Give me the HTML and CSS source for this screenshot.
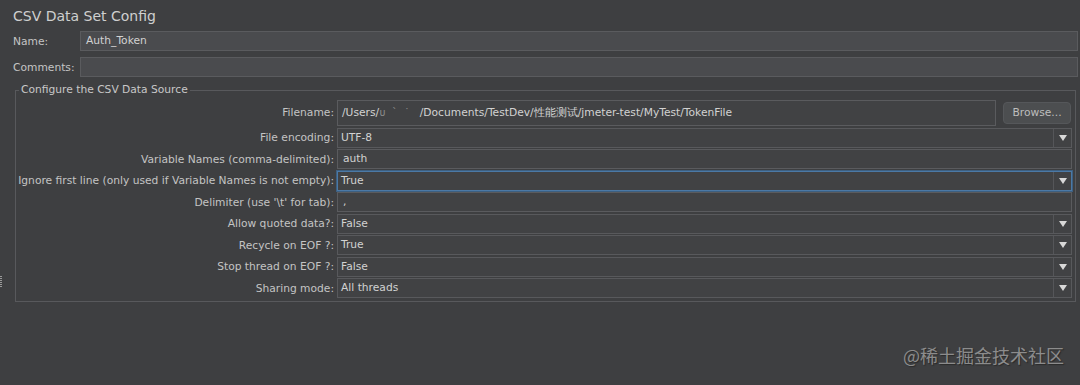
FILE: index.html
```html
<!DOCTYPE html>
<html lang="en">
<head>
    <meta charset="UTF-8">
    <title>CSV Data Set Config</title>
    <link rel="stylesheet" href="styles.css">
</head>
<body>
<div class="panel">
    <h1 class="panel--title">CSV Data Set Config</h1>

    <div class="panel--row">
        <label class="panel--label">Name:</label>
        <div class="field field_name">Auth_Token</div>
    </div>
    <div class="panel--row">
        <label class="panel--label">Comments:</label>
        <div class="field field_name"></div>
    </div>

    <fieldset class="source">
        <legend class="source--legend">Configure the CSV Data Source</legend>

        <div class="source--grid">
            <label class="source--label">Filename:</label>
            <div class="source--file">
                <div class="field field_file">/Users/<span class="blur">&#7452;&nbsp; &#96; &nbsp;&#729; &nbsp; </span>/Documents/TestDev/性能测试/jmeter-test/MyTest/TokenFile</div>
                <button class="browse">Browse...</button>
            </div>

            <label class="source--label">File encoding:</label>
            <div class="combo"><span class="combo--value">UTF-8</span><span class="combo--arrow"></span></div>

            <label class="source--label">Variable Names (comma-delimited):</label>
            <div class="field field_text">auth</div>

            <label class="source--label">Ignore first line (only used if Variable Names is not empty):</label>
            <div class="combo combo_focus"><span class="combo--value">True</span><span class="combo--arrow"></span></div>

            <label class="source--label">Delimiter (use '\t' for tab):</label>
            <div class="field field_text">,</div>

            <label class="source--label">Allow quoted data?:</label>
            <div class="combo"><span class="combo--value">False</span><span class="combo--arrow"></span></div>

            <label class="source--label">Recycle on EOF ?:</label>
            <div class="combo"><span class="combo--value">True</span><span class="combo--arrow"></span></div>

            <label class="source--label">Stop thread on EOF ?:</label>
            <div class="combo"><span class="combo--value">False</span><span class="combo--arrow"></span></div>

            <label class="source--label">Sharing mode:</label>
            <div class="combo"><span class="combo--value">All threads</span><span class="combo--arrow"></span></div>
        </div>
    </fieldset>

    <div class="splitter"></div>
</div>

<div class="watermark">@稀土掘金技术社区</div>
</body>
</html>
```

FILE: styles.css
```css
*, *:before, *:after {
    box-sizing: border-box;
    padding: 0;
    margin: 0;
}

html, body {
    height: 100%;
}

body {
    background: #3e3f41;
    overflow: hidden;
    font-family: "DejaVu Sans", Verdana, sans-serif;
    font-size: 10.7px;
    color: #c4c4c4;
    position: relative;
}

.panel {
    padding: 6px 2px 0 13px;
    position: relative;
    height: 100%;
}

.panel--title {
    font-size: 14px;
    font-weight: normal;
    color: #cfcfcf;
    height: 20px;
    line-height: 20px;
    margin-bottom: 5px;
}

.panel--row {
    display: flex;
    align-items: center;
    margin-bottom: 6px;
}

.panel--label {
    width: 67px;
    flex: 0 0 67px;
}

.field {
    background: #46474a;
    border: 1px solid #5a5b5e;
    color: #d2d2d2;
    height: 20px;
    line-height: 18px;
    padding: 0 5px;
    white-space: nowrap;
    overflow: hidden;
}

.field_name {
    flex: 1;
    background: #4a4b4e;
}

/* Bloc "Configure the CSV Data Source" */
.source {
    border: 1px solid #58595c;
    margin: 2px 0 0 2px;
    width: 1061px;
    padding: 0 3px 3px 0;
}

.source--legend {
    margin-left: 3px;
    padding: 0 2px;
    color: #c8c8c8;
    line-height: 14px;
}

.source--grid {
    display: grid;
    grid-template-columns: 318px 1fr;
    column-gap: 3px;
    row-gap: 1.5px;
    align-items: center;
    padding-top: 2px;
}

.source--label {
    text-align: right;
    white-space: nowrap;
}

.source--file {
    display: flex;
    align-items: center;
    gap: 7px;
    height: 27px;
}

.field_file {
    flex: 1;
    height: 26px;
    line-height: 24px;
    background: #414244;
    padding-left: 4px;
}

.blur {
    color: #8a8a8a;
}

.browse {
    width: 68px;
    height: 22px;
    margin-right: 1px;
    background: #4c4e50;
    border: 1px solid #55575a;
    border-radius: 4px;
    color: #bdbdbd;
    font-family: inherit;
    font-size: 10.7px;
}

.field_text {
    background: #414244;
    height: 20px;
}

.combo {
    display: flex;
    height: 20px;
    background: #414244;
    border: 1px solid #58595c;
    color: #d2d2d2;
}

.combo_focus {
    border-color: #4b79a6;
    box-shadow: 0 0 0 1px #3d5f80;
}

.combo--value {
    flex: 1;
    line-height: 18px;
    padding-left: 3px;
}

.combo--arrow {
    width: 18px;
    border-left: 1px solid #555659;
    display: flex;
    align-items: center;
    justify-content: center;
}

.combo--arrow:after {
    content: "";
    border-left: 4px solid transparent;
    border-right: 4px solid transparent;
    border-top: 6px solid #d8d8d8;
}

.splitter {
    position: absolute;
    left: 0;
    top: 276px;
    width: 2px;
    height: 12px;
    background: repeating-linear-gradient(#9a9a9a 0 1px, transparent 1px 2px);
}

.watermark {
    position: absolute;
    right: 16px;
    bottom: 17px;
    font-family: "Noto Sans CJK SC", sans-serif;
    font-size: 18px;
    color: #8c8c8c;
    text-shadow: 1px 1px 1px #2a2a2a;
}
```
